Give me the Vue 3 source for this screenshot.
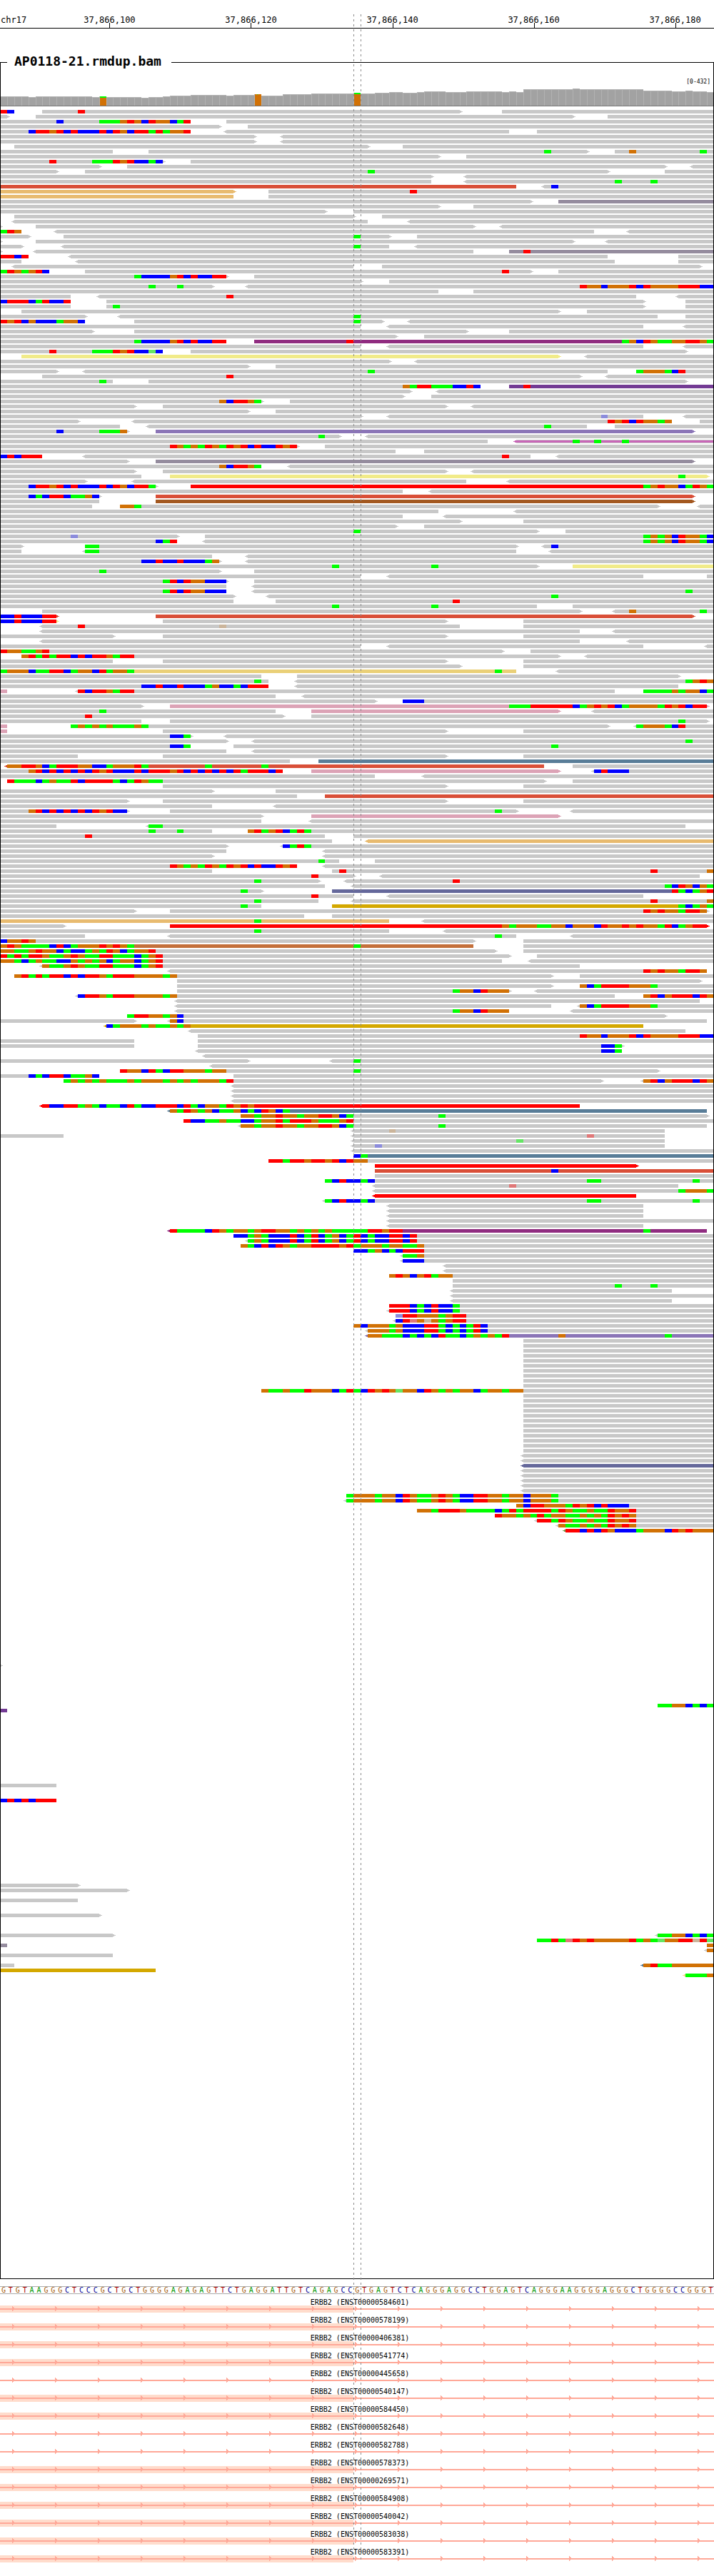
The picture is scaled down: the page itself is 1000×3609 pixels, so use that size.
<script setup>
const BASES = 101
const ROW = 7

// Column edge of a base, snapped to the pixel grid of the drawing
const edge = (n) => Math.round((n * 1000) / BASES)
const percent = (n) => `${(n * 100) / BASES}%`

const ticks = [
  { at: 15.5, label: '37,866,100' },
  { at: 35.5, label: '37,866,120' },
  { at: 55.5, label: '37,866,140' },
  { at: 75.5, label: '37,866,160' },
  { at: 95.5, label: '37,866,180' },
]

// Coverage as runs of [number of bases, height above the base line]
const coverageRuns = [
  [4, 13], [1, 12], [8, 13], [1, 12], [1, 13], [5, 12], [1, 11], [2, 12], [1, 13], [3, 14],
  [5, 15], [1, 14], [3, 15], [1, 16], [3, 14], [4, 16], [6, 17], [1, 18], [2, 17], [2, 18],
  [2, 19], [2, 18], [1, 19], [3, 20], [3, 19], [5, 20], [1, 19], [1, 20], [1, 19], [7, 23],
  [1, 24], [9, 23], [4, 21], [2, 20], [1, 21], [2, 20], [1, 19],
]
const variants = { 14: 2, 36: 0, 50: 2 }
const coverage = coverageRuns
  .flatMap(([count, height]) => Array(count).fill(height))
  .map((height, n) => ({
    x: edge(n),
    width: edge(n + 1) - edge(n),
    height,
    y: 24 - height,
    variant: n in variants,
    green: variants[n] ?? 0,
  }))

// One line per row: reads are start-end with < or > for the strand tip and an
// optional :colour; mismatches are a position followed by the read's bases,
// in lower case where the base quality is low. "*n" repeats a line n times.
const pileup = `
6-65> 71-101 0TC 11T
0-1> 5-81> 86-101
0-27 32-101 8C 14AAAGTGCTGGCAT
0-31> 35-101
0-27 <32-72 76-101 4CTTGTCTCCCTCTGCTTATAGGT
0-36> <40-101 *2
2-52> 57-101
0-16 21-83> 87-101 77A 89G 99A
0-62> 66-101
0-23> 27-101 7T 13AAATGTCCAC
0-14> 18-94> <98-101
0-8> 12-86> 94-101 52A
0-61> <66-101
0-61 <66-101 87A 92A
0-73:r <77-101 78C
0-33>:o 38-101 58T
0-33:o 38-101
0-75> 79-101:p
0-62> 67-101
0-46> 50-101
2-50> 54-101
<2-52 <58-101
0-0> 5-67> <71-101
<8-84 <89-101 0ATG
0-4> 9-55> 59-101 50A
0-0> 5-81> <86-101
0-3> <9-55 <59-101 50A
0-0> <5-67 72-101:p 74T
<10-86 96-101 0TTCT
0-3 <11-87 96-101
<2-50 54-99>
12-75> 79-101 0ATGAGTC 71T
0-32> 36-101 19ACCCCGTCTCCTT
0-51> 55-101
0-30> <35-101 21A 25A 82TGGCGGGTCTGGGGTTTCC
0-62 67-101
0-10 <14-90 <96-101 32T
15-91> 97-101 0CTTTCATCCT
0-10 15-91> 97-101 16A
3-79> 83-101
0-12> <17-93 97-101 50A
19-54> <58-101 0TGTCGCCCAGGC 50A
0-51 <55-91 <97-101
0-13> 19-66> 72-101
0-56> 60-101
0-32 36-101:m 19ACCCCGTCTCCTT 49T 88AGCTGAAGGTTGA
0-51 <55-91 <97-101
0-23 27-97> 7T 13AAATGTCCaC
3-79>:y <83-101
0-55> <59-101
0-35> 39-101
0-8> <12-86 90-101 52A 90AGGGACT
6-82> <86-101 32T
0-16 21-97> 14A
0-68 72-101:v 57GATTAAACCTC 74T
0-58> <62-101
0-57> 61-101
0-37> 41-101 31GCTTGA
0-19> 23-63> <67-101
0-35> 39-101
0-51> <55-91 <97-101 85c
0-11> <19-95 99-101 86TGTCTGGAG
0-17 <21-83 87-101 77A
0-18> 22-98>:l 8C 14AAAG
0-48> <52-101 45A
0-69 <73-101:k 81A 84A 88A
0-42> 46-101 24TGAGATGATGTCTCCTGT
0-56 60-101
<12-75 <79-101 0CTCTTT 71T
0-18> 22-98>:p
0-37 <41-101 31GCTTGA
0-19> 23-63> <67-101
0-20 24-100>:y 96A
0-12> <19-66 <72-101
0-22> 27-101:R 4CTTGTCTCCCTCTGCTTA 91AGTGGCATGA
0-57 <61-101
0-14> 22-98>:r 4CACTTCAAGC
0-14 22-98>:b
0-13 17-93> <99-101 17GGA
0-62 <73-101
0-57 <63-101
0-65> 74-101
0-56> 60-101
0-76> 80-101 50A
0-25> 29-101 10c 91AGAGCTGGAC
0-25 <29-101 22CAT 91AGAGCTGGAC
0-3> 12-73> <77-101 12AA 78C
0-3 <12-73 <78-101 12AA
0-30 <35-101
0-31> <35-101 20CCTCCTCCCAG
0-76> 81-101:y 47A 61A
0-31> 36-101 14A
0-51 <55-91 100-101
0-32> 36-101 23ATCTGGCCC
0-32 <36-101
0-32 <36-101 23ATCTGGCCC 97A
0-33> <38-101 78A
0-33 39-101 64T
0-76 81-101 47A 61A
6-82> <87-101 89G 99A
0-8>:r 22-98>:r 0CCTCCCTT
0-8>:y 23-63> 74-101 0CCTCCCTT
<6-65 74-101 11T 31g
<6-82 <87-101
0-16> 23-63> 74-101
<6-82 <89-101
0-51 <55-91 <100-101
0-71> 75-101 0TGGAAGT
3-79> <83-101 3GTATATTCTCTTGATT
0-16 23-63> 74-101
0-65> 74-101
0-73:g <79-101 0AGGGCAATTCAGGCTAGGA 70A
0-37 42-96>
0-38 <42-101 36A 97AGTG
0-38 <42-96 20CCTCCTCCCAGCCACTTT
0-1:s <11-87 91-101 11TCTTGATT 91AAAAGAGGCA
0-39 <43-101
0-53> 57-101 57CCC
0-20> 24-100>:s 72AAATTTTTTCAGTGTCAGGGGATGTCTT
0-39 44-79>:s <84-101 14A
0-40> 44-101 12T
0-20 24-100> 96A
0-1:s 10-86> <90-101 10AGAGAGAAAGA 90AGGGACT
0-1:s 23-63> 74-101
0-27> <32-101 24CCA
0-32> <36-101 97A
0-27 33-101 24CCA 78A
0-32 <36-101
0-11 23-63> 74-101
0-41 45-101:t
<1-77:r 81-101 1GGTTGCATTTGGCCAGGGTA 29A 37A
0-40 44-79>:s <84-101 4GTCTCTCTCTGTCCCTCTTTGTCTCTCTCTATTTCT 84CTCCC
0-53 <60-101
1-77> 81-101 1TAAACAGAATCTTTTACATGAA
23-63> 74-101
0-30> 39-101
0-42 46-101:r
0-18> 23-63> 74-101
0-30 <39-101
0-18> 24-73> <81-101 4GTCTCTCTCTGTCC 70A
0-37> 44-79>:s
0-37 <44-101
0-8 <21-97 21AA
0-30 35-101 21A 25A 35GTAGTCATA
0-46 50-101 12T
0-47 <52-101:o
0-32> <40-101 40CATA
0-32 <46-101
0-30> <46-101
0-48 53-101 45A
0-42 <46-101 24TGAGATGATGTCTCCTGT
0-30 47-101 48T 92T 100G
0-50> <54-99 44T
0-45> <49-101 36A 64T
0-46 <50-101 94ACTGCGA
0-37> 47-101:u 34A 95TACAGT
0-50 <55-91 44T
0-45 <50-101 36A 92T 100G
0-37 47-101:d 34A 96ACAGA
0-19> 24-100> 91TGTGGATTG
0-43 47-101
0-55:o <60-101 36A
0-9> 24-100>:R 71GAGGGAAGGCGGGCTGGTGTGGATCAG
0-55 <63-101 36A
0-12 <24-73 <81-101 70A
0-67> 74-101 0CGGTG
0-67:n 74-101 0GTGAAAACTCAGGGTGTGA 50A
0-70> 74-101 0GGAAGTGGCACCAGATGCAGGT
0-72> 76-101 0TATATTGAAGTGAATTAAACAGT
0-71 <75-101 0GGACAGAACCGAGAGCAGGCAGT
<6-82 6GAAGTGAATTAAACAGT
<24-100 91TGTGGATTG
2-78> 82-101 2GTATATTCTCTTGATTTGGGGAG
25-99>
25-78> 82-101 82GCATTTTGGGA
25-72> <76-101 64AGGCTGGG
<11-87 91-101 11CTTGATTTGGGGAG 91GTCGTTTCTG
<25-99
<25-78 <82-101 82GCATTTTGGGA
<25-72 <81-101 64AGGCTGGG
18-94> 18ATTGGAGC
0-19> <24-100 24GC
<15-91:d 15CAGGGAGAAGAG
<27-97
28-101 82TGGCGGGTCTGGGGTTTCC
0-19 28-101
0-19 28-88> 85CCA
<28-88 85CCA
<29-101
0-35> <47-101 50A
<30-101
17-93> 17TGGCTACTTGGGAGG 50A
0-14 33-101 4CACTTCAAGC
9-85> <91-101 9AGAGAGAAAGAGGGAGAGAGGGAT 91GTCGTTTCTG
<33-101 *4
<6-82:R 6TCCTTAGACAACTACCTTTCTACGGATGTG
<24-100:t 24GATGAGCAAGCACTGCA
34-100> 34GGAGGTGGAGGTTGCA 62A
26-101 26TCCAAGAACCAGGTATTTGAAAGT
<34-100 34GGAGGTGGAGGTTGCA 62A
<50-94 55g
0-9 <50-94 83t
<50-94 73a
<50-94 53c
<50-101
50-101:t 50CA
38-101 38TTATTGTTGTCTGG
53-90>:R
53-101:r 78C
53-101
46-101 46ACTCCAC 83AA 98A
<53-96 72t
<53-96 96AGGGA
<53-90:R
<46-101 46ACTCCAC 83AA 98A
<55-91 *3
<55-101
<55-91
<24-100:m 24TAAAACTGAGGAGTTGGAGAGAGAAAAATTGTT 91A
33-101 33CCAGACCCTCATCAGCATCACCTTCT
<35-101 35AGACCCTCATCAGCATCACCTTCT
34-101 34GACTCTGAGGTTTTGTAGGGAGGAAG
50-101 50CCAGCACTTT
<57-101 57AAG
<57-101 57CCC
<63-101 *2
55-101 55GTGCGTAGG
64-101
64-101 87A 92A
<64-95
<64-101
<64-95
55-101 55TTTCACTCCA
<55-101 55TTTCACTCCA
56-101 56cTTGGGAGTT
<56-101 56CTtGgGAGTT
50-101 50GCGGGAGCCCTTACACATC
<52-101 52GGGAGCCCTTACACATC
<52-101:l 52GGAAACACACTAACAGAGAT 79G 94A
74-101 *10
37-101 37GAAGAATGGGCATACTGTGaGGCTGAGAGGCAGGAGG
74-101 *12
<74-101 *2
<74-101:u
<74-101 *5
49-101 49AGGGAGGCTGAAGTGACCTTGGAGGCGGGA
<49-101 49AGGGAGGCTGAAGTGACCTTGGAGGCGGGA
73-101 73GCTTGGGATGTCTCCC
59-101 59GGATTTGAAAACATATTTTATGAAGAATGGT
70-101 70TGGAGATAGGAAGAGATGTG
<76-101 76TTATGAAGAATGGT
<79-101 79GAAGAGATGTG
<80-101:q 80TTCTCTGCCCAGGGCTGTGGG
- *26
0-0>
- *7
93-101 93AAGGCACA
0-1:v
- *14
0-8
- *2
0CTCTCTTT
- *16
0-11>
0-18>
-
0-11
- *2
0-14>
- *3
0-16> <93-101 93AAGGCACA
76-101 76AATAtTGTGGGGGTAGAaGGTTgTa
0-1:p 100G
<100-101 100G
0-16
-
0-2 <91-101:t 91GTAAGGGGGG
0-22:d
<97-101:w 97AAAG
`

const bars = []
const tips = []
const calls = []

function tipPath(x, y, dir) {
  return `M${x} ${y + 1}h${2 * dir}v1h${2 * dir}v1h${-2 * dir}v1h${-2 * dir}z`
}

let row = 0
for (const line of pileup.trim().split('\n')) {
  const repeat = Number(line.match(/\*(\d+)$/)?.[1] ?? 1)
  for (let i = 0; i < repeat; i++, row++) {
    const y = row * ROW
    for (const token of line.split(' ')) {
      const read = token.match(/^(<?)(\d+)-(\d+)(>?)(?::(\w))?$/)
      if (read) {
        const [, left, start, end, right, colour = 'plain'] = read
        const x = edge(+start)
        const width = edge(+end) - x
        const tone = `read-${colour}`
        if (colour === 'k') {
          // Drawn as a coloured core inside a plain read
          bars.push({ x, y, width, height: 5, tone: 'read-plain' })
          bars.push({ x, y: y + 1, width, height: 3, tone })
        } else if (width > 0) {
          bars.push({ x, y, width, height: 5, tone })
        }
        if (left) tips.push({ d: tipPath(x, y, -1), tone })
        if (right) tips.push({ d: tipPath(edge(+end), y, 1), tone })
        continue
      }
      const run = token.match(/^(\d+)([ACGTacgt]+)$/)
      if (!run) continue
      ;[...run[2]].forEach((base, j) => {
        const at = +run[1] + j
        const low = base === base.toLowerCase()
        calls.push({
          x: edge(at),
          y,
          width: edge(at + 1) - edge(at),
          tone: `call-${base.toLowerCase()}${low ? ' low' : ''}`,
        })
      })
    }
  }
}

const sequence = [
  ...('GTGTAAGGGCTCCCGCTGCTGGGGAGAGAGTTCTGAGGATTGTCAGAGCC' +
    'GTGAGTCTCAGGGAGGCCTGGAGTCAGGGAAGGGGAGGGCTGGGGCCGGGT'),
]

const transcripts = [
  ['584601', true], ['578199', true], ['406381', true], ['541774', true], ['445658', false],
  ['540147', true], ['584450', true], ['582648', false], ['582788', false], ['578373', true],
  ['269571', true], ['584908', true], ['540042', true], ['583038', true], ['583391', true],
].map(([id, exon]) => ({ name: `ERBB2 (ENST00000${id})`, exon }))

const chevrons = Array.from({ length: 17 }, (_, i) => 17 + i * 60)
</script>

<template>
  <main class="browser">
    <svg class="ruler" aria-label="Genome position">
      <text class="ruler-text" x="1" y="32">chr17</text>
      <g v-for="tick in ticks" :key="tick.label">
        <text class="ruler-text" :x="percent(tick.at)" y="32" text-anchor="middle">{{ tick.label }}</text>
        <rect :x="percent(tick.at)" y="32" width="1" height="8" />
      </g>
      <rect x="0" y="39" width="100%" height="1" />
    </svg>

    <fieldset class="track">
      <legend>AP0118-21.rmdup.bam</legend>
      <p class="range">[0-432]</p>
      <svg class="coverage" viewBox="1 0 998 25" preserveAspectRatio="none">
        <template v-for="bar in coverage" :key="bar.x">
          <rect class="cover-edge" :x="bar.x" :y="bar.y" :width="bar.width" :height="bar.height" />
          <rect
            :class="bar.variant ? 'call-g' : 'cover-fill'"
            :x="bar.x + 1"
            :y="bar.variant ? bar.y : bar.y + 1"
            :width="bar.width - 1"
            :height="bar.height"
          />
          <rect v-if="bar.green" class="call-a" :x="bar.x + 1" :y="bar.y" :width="bar.width - 1" :height="bar.green" />
        </template>
        <rect class="call-a" x="360" y="8" width="1" height="1" />
        <rect class="cover-base" x="0" y="24" width="1000" height="1" />
      </svg>
      <svg class="reads" viewBox="1 0 998 3038" preserveAspectRatio="none">
        <rect v-for="(bar, i) in bars" :key="'b' + i" :class="bar.tone" :x="bar.x" :y="bar.y" :width="bar.width" :height="bar.height" />
        <path v-for="(tip, i) in tips" :key="'t' + i" :class="tip.tone" :d="tip.d" />
        <rect v-for="(call, i) in calls" :key="'c' + i" :class="call.tone" :x="call.x" :y="call.y" :width="call.width" height="5" />
      </svg>
    </fieldset>

    <div class="sequence">
      <span v-for="(base, i) in sequence" :key="i" :class="'base-' + base">{{ base }}</span>
    </div>

    <section class="genes">
      <div v-for="item in transcripts" :key="item.name" class="gene">
        <p class="gene-name">{{ item.name }}</p>
        <svg class="gene-line" viewBox="0 0 1000 10" preserveAspectRatio="none">
          <rect v-if="item.exon" class="exon" x="0" y="0" width="495" height="10" />
          <rect class="strand" x="0" y="4" width="1000" height="2" />
          <path v-for="x in chevrons" :key="x" class="strand" :d="`M${x} 1h1v1h1v1h1v3h-1v1h-1v1h-1z`" />
        </svg>
      </div>
    </section>

    <i class="guide" :style="{ left: percent(50) }"></i>
    <i class="guide" :style="{ left: percent(51) }"></i>
  </main>
</template>

<style>
body {
  margin: 0;
  background: #fff;
}
</style>

<style scoped>
.browser {
  position: relative;
  padding-bottom: 19px;
  overflow: hidden;
  color: #000;
  font-family: "DejaVu Sans Mono", monospace;
}

svg {
  display: block;
  width: 100%;
  shape-rendering: crispEdges;
}

.ruler {
  height: 40px;
}

.ruler-text {
  font-size: 12px;
}

.track {
  min-width: 0;
  margin: 37px 0 0;
  padding: 0;
  border: 1px solid #000;
}

.track legend {
  margin-left: 9px;
  padding: 0 14px 4px 10px;
  font-size: 18px;
  font-weight: bold;
  line-height: 17px;
}

.range {
  height: 26px;
  margin: 0;
  padding-right: 4px;
  font-size: 8px;
  line-height: 34px;
  text-align: right;
}

.coverage {
  height: 25px;
}

.cover-edge { fill: #b2b2b2; }
.cover-fill { fill: #a2a2a2; }
.cover-base { fill: #777; }

.reads {
  height: 3038px;
  margin-top: 5px;
}

.read-plain { fill: #c8c8c8; }
.read-r { fill: #d94f38; }
.read-o { fill: #e8bb70; }
.read-p { fill: #958c9e; }
.read-m { fill: #902c80; }
.read-y { fill: #f1eb89; }
.read-v { fill: #733b94; }
.read-l { fill: #8b75b7; }
.read-k { fill: #c966b8; }
.read-R { fill: #f00; }
.read-b { fill: #a35820; }
.read-g { fill: #ead078; }
.read-s { fill: #dca3b6; }
.read-t { fill: #597d98; }
.read-u { fill: #65689b; }
.read-d { fill: #d4a800; }
.read-n { fill: #c4703b; }
.read-q { fill: #7a9a4a; }
.read-w { fill: #f5d98a; }

.call-a { fill: #0f0; }
.call-c { fill: #00f; }
.call-g { fill: #d17105; }
.call-t { fill: #f00; }
.call-a.low { fill: #64e664; }
.call-c.low { fill: #8c8cdc; }
.call-g.low { fill: #cbb59b; }
.call-t.low { fill: #e07878; }

.sequence {
  display: flex;
  height: 9px;
  margin-top: 10px;
  border: solid #aaa;
  border-width: 1px 0;
  font-size: 10px;
  line-height: 9px;
  text-align: center;
}

.sequence span {
  flex: 1 1 0;
  min-width: 0;
}

.base-A { color: #009600; }
.base-C { color: #000096; }
.base-G { color: #a86010; }
.base-T { color: #aa0000; }

.genes {
  margin-top: 1px;
}

.gene-name {
  height: 9px;
  margin: 0;
  padding: 6px 0 0 8px;
  font-size: 10px;
  line-height: 10px;
  text-align: center;
}

.gene-line {
  height: 10px;
}

.exon { fill: #ffdccc; }
.strand { fill: #ffa898; }

.guide {
  position: absolute;
  top: 20px;
  bottom: 20px;
  width: 1px;
  background: repeating-linear-gradient(#8c8c8c 0 3px, transparent 3px 7px);
}
</style>
